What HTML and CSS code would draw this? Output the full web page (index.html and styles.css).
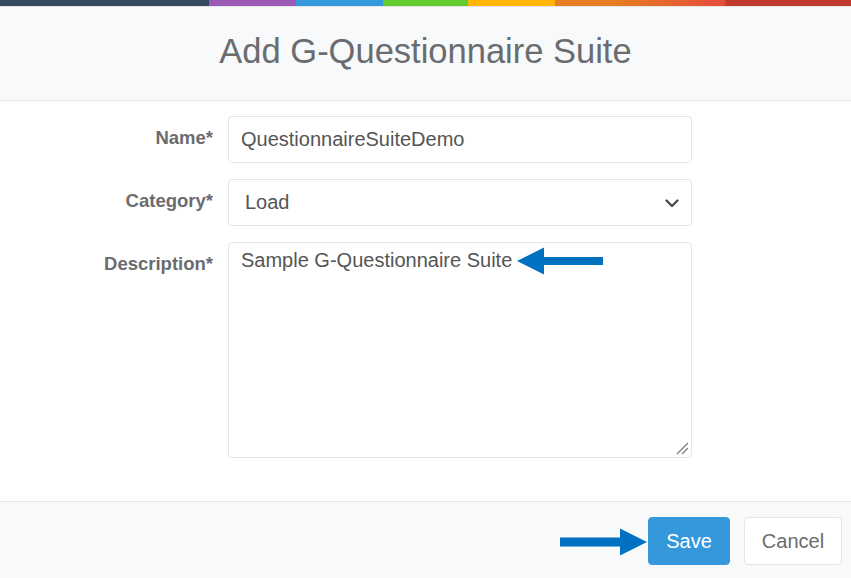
FILE: index.html
```html
<!DOCTYPE html>
<html>
<head>
<meta charset="utf-8">
<link rel="stylesheet" href="styles.css">
</head>
<body>
<div class="modal">
  <div class="color-line"></div>
  <div class="modal-header">
    <h4 class="modal-title">Add G-Questionnaire Suite</h4>
  </div>
  <div class="modal-body">
    <div class="form-row">
      <label class="form-label">Name*</label>
      <div class="form-control input">QuestionnaireSuiteDemo</div>
    </div>
    <div class="form-row">
      <label class="form-label">Category*</label>
      <div class="form-control select">
        <span>Load</span>
        <svg class="chevron" width="14" height="9" viewBox="0 0 14 9"><path d="M1.5 1.5 L7 7 L12.5 1.5" fill="none" stroke="#444" stroke-width="2.2" stroke-linecap="round" stroke-linejoin="round"/></svg>
      </div>
    </div>
    <div class="form-row">
      <label class="form-label">Description*</label>
      <div class="form-control textarea">Sample G-Questionnaire Suite
        <svg class="grip" width="14" height="14" viewBox="0 0 14 14"><path d="M13 2 L2 13 M13 7 L7 13" stroke="#777" stroke-width="1.2"/></svg>
      </div>
    </div>
  </div>
  <div class="modal-footer">
    <button class="btn btn-primary">Save</button>
    <button class="btn btn-default">Cancel</button>
  </div>
</div>
<svg class="arrow arrow-left" width="87" height="28" viewBox="0 0 87 28"><path d="M0 14 L27 0.5 L27 10 L86 10 L86 18 L27 18 L27 27.5 Z" fill="#0070c0"/></svg>
<svg class="arrow arrow-right" width="88" height="28" viewBox="0 0 88 28"><path d="M87 14 L60 0.5 L60 9.5 L0 9.5 L0 18.5 L60 18.5 L60 27.5 Z" fill="#0070c0"/></svg>
</body>
</html>
```
FILE: styles.css
```css
html, body {
  margin: 0;
  padding: 0;
  background: #ffffff;
  font-family: "Liberation Sans", Arial, sans-serif;
  color: #6a6c6f;
}
.modal {
  width: 851px;
  height: 578px;
  display: flex;
  flex-direction: column;
  overflow: hidden;
}
.color-line {
  height: 6px;
  background: linear-gradient(to right, #34495e 0%, #34495e 24.6%, #9b59b6 24.6%, #9b59b6 34.8%, #3498db 34.8%, #3498db 45%, #62cb31 45%, #62cb31 55%, #ffb606 55%, #ffb606 65.2%, #e67e22 65.2%, #e67e22 72%, #e74c3c 85%, #c0392b 85.4%, #c0392b 100%);
  border-bottom: 1px solid #e4e5e7;
}
.modal-header {
  background: #f7f9fa;
  height: 93px;
  border-bottom: 1px solid #e4e5e7;
  display: flex;
  align-items: center;
  justify-content: center;
}
.modal-title {
  margin: 0;
  font-size: 34.5px;
  font-weight: normal;
  color: #6a6c6f;
  position: relative;
  top: -2px;
}
.modal-body {
  padding: 15px 0 43px 0;
  display: flex;
  flex-direction: column;
  gap: 16px;
}
.form-row {
  display: grid;
  grid-template-columns: 213px 464px;
  column-gap: 15px;
  align-items: start;
}
.form-label {
  text-align: right;
  font-weight: bold;
  font-size: 18.5px;
  padding-top: 11px;
  color: #6a6c6f;
}
.form-control {
  box-sizing: border-box;
  border: 1px solid #e4e5e7;
  border-radius: 4px;
  background: #fff;
  font-size: 20px;
  color: #555;
}
.input {
  height: 47px;
  padding: 0 12px;
  line-height: 45px;
}
.select {
  height: 47px;
  padding: 0 12px 0 16px;
  display: flex;
  align-items: center;
  justify-content: space-between;
}
.chevron {
  margin-top: 2px;
}
.textarea {
  height: 216px;
  padding: 4px 12px;
  line-height: 27px;
  position: relative;
}
.grip {
  position: absolute;
  right: 2px;
  bottom: 2px;
}
.modal-footer {
  flex: 1;
  background: #f7f9fa;
  border-top: 1px solid #e4e5e7;
  display: flex;
  justify-content: flex-end;
  align-items: flex-start;
  gap: 14px;
  padding: 15px 9px 0 0;
}
.btn {
  height: 48px;
  border-radius: 4px;
  font-family: "Liberation Sans", Arial, sans-serif;
  font-size: 20px;
  padding: 0;
  cursor: pointer;
}
.btn-primary {
  width: 82px;
  background: #3498db;
  border: 1px solid #3498db;
  color: #fff;
}
.btn-default {
  width: 98px;
  background: #fff;
  border: 1px solid #e4e5e7;
  color: #6a6c6f;
}
.arrow {
  position: absolute;
}
.arrow-left {
  left: 517px;
  top: 247px;
}
.arrow-right {
  left: 560px;
  top: 528px;
}
```
